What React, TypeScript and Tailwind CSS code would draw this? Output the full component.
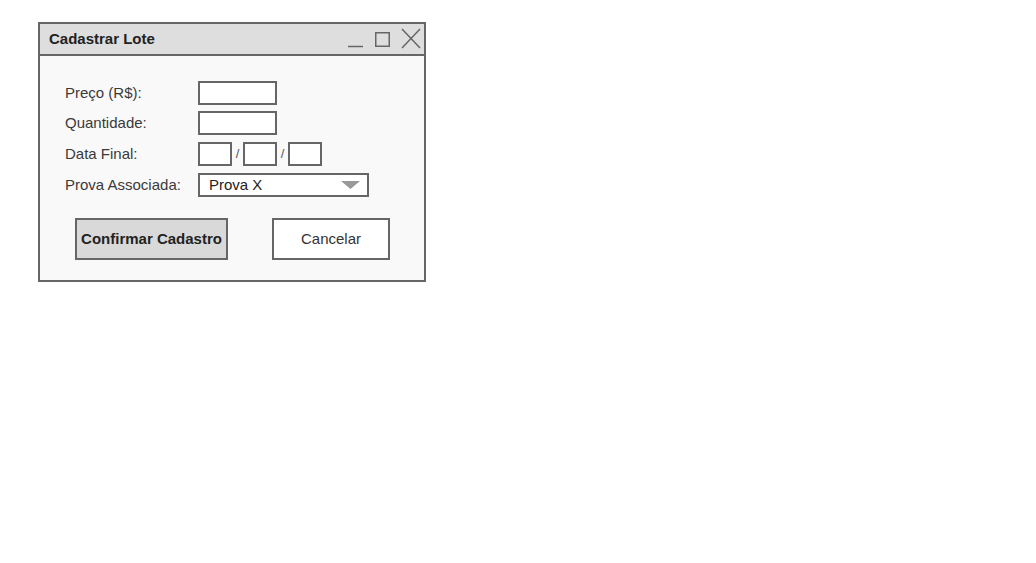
import React from 'react';

function WindowControls() {
  return (
    <svg width="80" height="30" viewBox="0 0 80 30" fill="none" stroke="#666" strokeWidth="1.5">
      {/* minimize */}
      <line x1="4" y1="22.5" x2="19" y2="22.5" />
      {/* maximize */}
      <rect x="31.75" y="8.75" width="13.5" height="13.5" />
      {/* close */}
      <line x1="58" y1="5" x2="76" y2="24" />
      <line x1="76" y1="5" x2="58" y2="24" />
    </svg>
  );
}

function TextBox({ width }: { width: string }) {
  return <div className={`${width} h-[24px] border-2 border-[#666] bg-white`} />;
}

export default function App() {
  return (
    <div
      className="min-h-screen bg-white pt-[22px] pl-[38px]"
      style={{ fontFamily: '"Liberation Sans", Arial, sans-serif' }}
    >
      <div className="w-[388px] border-2 border-[#666] bg-[#f9f9f9]">
        {/* Title bar */}
        <div className="h-[32px] bg-[#dedede] border-b-2 border-[#666] flex items-center justify-between pl-[9px]">
          <span className="text-[15px] font-bold text-[#222]">Cadastrar Lote</span>
          <WindowControls />
        </div>

        {/* Form */}
        <div className="pt-[25px] pb-[20px] text-[15px] text-[#3a3a3a]">
          <div className="pl-[25px] flex flex-col">
            <div className="flex items-center h-[24px]">
              <span className="w-[133px] pt-[1px]">Preço (R$):</span>
              <TextBox width="w-[79px]" />
            </div>
            <div className="flex items-center h-[24px] mt-[6px]">
              <span className="w-[133px] pt-[1px]">Quantidade:</span>
              <TextBox width="w-[79px]" />
            </div>
            <div className="flex items-center h-[24px] mt-[7px]">
              <span className="w-[133px] pt-[1px]">Data Final:</span>
              <TextBox width="w-[34px]" />
              <span className="w-[11px] text-center text-[13px] text-[#555]">/</span>
              <TextBox width="w-[34px]" />
              <span className="w-[11px] text-center text-[13px] text-[#555]">/</span>
              <TextBox width="w-[34px]" />
            </div>
            <div className="flex items-center h-[24px] mt-[7px]">
              <span className="w-[133px] pt-[1px]">Prova Associada:</span>
              <div className="w-[171px] h-[24px] border-2 border-[#666] bg-white flex items-center justify-between pl-[9px] pr-[7px]">
                <span className="text-[#222] pt-[1px]">Prova X</span>
                <svg width="19" height="8" viewBox="0 0 19 8">
                  <polygon points="0,0 19,0 9.5,8" fill="#999" />
                </svg>
              </div>
            </div>
          </div>

          {/* Buttons */}
          <div className="flex items-center pl-[35px] mt-[21px] gap-[44px]">
            <button className="w-[153px] h-[42px] border-2 border-[#666] bg-[#d9d9d9] font-bold text-[#222]">
              Confirmar Cadastro
            </button>
            <button className="w-[118px] h-[42px] border-2 border-[#666] bg-white text-[#333]">
              Cancelar
            </button>
          </div>
        </div>
      </div>
    </div>
  );
}
